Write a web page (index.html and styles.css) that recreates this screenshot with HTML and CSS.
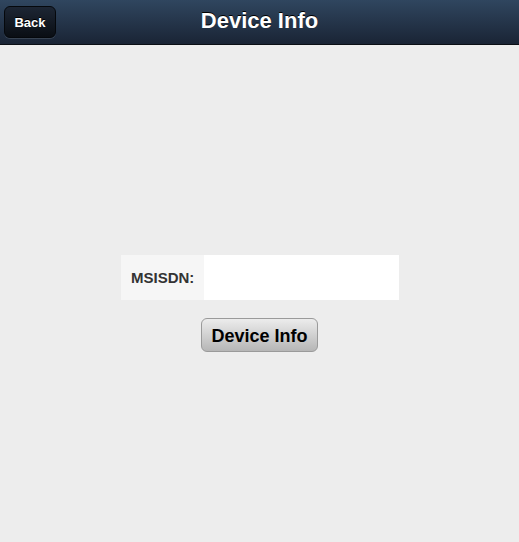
FILE: index.html
```html
<!DOCTYPE html>
<html>
<head>
<meta charset="utf-8">
<link rel="stylesheet" href="styles.css">
</head>
<body>
<div class="page">
  <header class="header">
    <button class="back">Back</button>
    <h1 class="title">Device Info</h1>
  </header>
  <main class="content">
    <div class="field">
      <label class="field-label" for="msisdn">MSISDN:</label>
      <input class="field-input" id="msisdn" type="text">
    </div>
    <button class="action">Device Info</button>
  </main>
</div>
</body>
</html>
```
FILE: styles.css
```css
html, body {
  margin: 0;
  padding: 0;
  height: 100%;
}
body {
  background: #ededed;
  font-family: "Liberation Sans", Arial, Helvetica, sans-serif;
}
.page {
  display: flex;
  flex-direction: column;
  height: 100%;
}
.header {
  position: relative;
  height: 44px;
  border-bottom: 1px solid #0b0f15;
  background: linear-gradient(#30465f, #1a2435);
  display: flex;
  align-items: center;
  justify-content: center;
  flex-shrink: 0;
}
.back {
  position: absolute;
  left: 4px;
  top: 6px;
  width: 52px;
  height: 32px;
  border: 1px solid #05080c;
  border-radius: 6px;
  background: linear-gradient(#1d2634, #0a0e14);
  box-shadow: 0 1px 0 rgba(255,255,255,0.12);
  color: #fff;
  font-family: "Liberation Sans", Arial, sans-serif;
  font-weight: bold;
  font-size: 13px;
  padding: 0;
  text-shadow: 0 -1px 0 #000;
}
.title {
  margin: 0;
  color: #fff;
  font-size: 22px;
  font-weight: bold;
  text-shadow: 0 -1px 0 #000;
  transform: translateY(-1px);
}
.content {
  display: flex;
  flex-direction: column;
  align-items: center;
  padding-top: 210px;
}
.field {
  display: flex;
  width: 278px;
  height: 45px;
  margin-left: 1px;
}
.field-label {
  width: 83px;
  background: #f6f6f6;
  display: flex;
  align-items: center;
  box-sizing: border-box;
  padding-left: 10px;
  font-size: 15px;
  font-weight: bold;
  color: #333;
}
.field-input {
  flex: 1;
  border: none;
  background: #fff;
  outline: none;
  margin: 0;
  padding: 0 8px;
}
.action {
  margin-top: 18px;
  width: 117px;
  height: 34px;
  border: 1px solid #9a9a9a;
  border-radius: 6px;
  background: linear-gradient(#ececec, #b6b6b6);
  font-family: "Liberation Sans", Arial, sans-serif;
  font-weight: bold;
  font-size: 18px;
  color: #000;
  padding: 0;
  line-height: 34px;
}
```
